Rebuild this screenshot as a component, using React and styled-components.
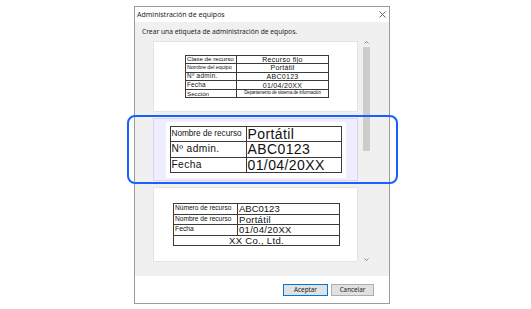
import React from 'react';
import styled, { createGlobalStyle } from 'styled-components';

const GlobalStyle = createGlobalStyle`
  html, body {
    margin: 0;
    padding: 0;
    background: #ffffff;
  }
  body {
    width: 531px;
    height: 309px;
    overflow: hidden;
    font-family: "Noto Sans", "Open Sans", sans-serif;
  }
`;

const Stage = styled.div`
    position: relative;
    width: 531px;
    height: 309px;
    box-sizing: border-box;
    padding: 6px 0 0 134px;
`;

const Dialog = styled.div`
    width: 256px;
    height: 298px;
    box-sizing: border-box;
    border: 1px solid #9c9c9c;
    background: #f0f0f0;
    display: flex;
    flex-direction: column;
`;

const TitleBar = styled.div`
    height: 15px;
    background: #ffffff;
    display: flex;
    align-items: center;
    justify-content: space-between;
    padding: 0 3px 0 2px;
    font-size: 7px;
    color: #1e1e1e;
`;

const Body = styled.div`
    flex: 1;
    display: flex;
    flex-direction: column;
`;

const Subtitle = styled.div`
    padding: 5px 0 0 7px;
    height: 10px;
    line-height: 10px;
    font-size: 6.7px;
    color: #1e1e1e;
`;

const Preview = styled.div`
    margin: 1px 0 0 18px;
    display: flex;
    gap: 4px;
    height: 234px;
`;

const PageList = styled.div`
    width: 205px;
    display: flex;
    flex-direction: column;
    gap: 6px;
    padding-top: 3px;
`;

const Page = styled.div`
    height: ${p => p.$h}px;
    box-sizing: border-box;
    border: 1px solid ${p => p.$selected ? '#d4d4f4' : '#e4e4e4'};
    background: ${p => p.$selected ? '#eeeeff' : '#ffffff'};
    display: flex;
    align-items: center;
    justify-content: center;
`;

const LabelSheet = styled.div`
    width: 180px;
    height: 56px;
    background: #ffffff;
    display: flex;
    align-items: center;
    justify-content: center;
`;

const Table = styled.table`
    width: ${p => p.$w}px;
    table-layout: fixed;
    border-collapse: collapse;
    font-family: "Liberation Sans", Arial, sans-serif;
    color: #111;
    margin-left: ${p => p.$shift || 0}px;
`;

const Row = styled.tr`
    height: ${p => p.$h}px;
`;

const Cell = styled.td`
    border: 1px solid #3a3a3a;
    padding: 0 1px;
    line-height: 1;
    white-space: nowrap;
    overflow: hidden;
    font-size: ${p => p.$size}px;
    text-align: ${p => p.$center ? 'center' : 'left'};
    letter-spacing: ${p => p.$ls || 0}px;
`;

const Scrollbar = styled.div`
    width: 8px;
    height: 226px;
    background: #f0f0f0;
    display: flex;
    flex-direction: column;
    align-items: center;
`;

const ArrowBox = styled.div`
    height: 9px;
    display: flex;
    align-items: center;
    justify-content: center;
`;

const Thumb = styled.div`
    width: 7px;
    height: 104px;
    background: #cdcdcd;
`;

const Track = styled.div`
    flex: 1;
`;

const Footer = styled.div`
    height: 27px;
    background: #ffffff;
    display: flex;
    justify-content: flex-end;
    align-items: flex-start;
    gap: 3px;
    padding: 8px 15px 0 0;
    box-sizing: border-box;
`;

const Button = styled.button`
    width: ${p => p.$w}px;
    height: 12px;
    padding: 0;
    box-sizing: border-box;
    border: 1px solid ${p => p.$primary ? '#0078d7' : '#adadad'};
    background: #e1e1e1;
    font-family: "Noto Sans", "Open Sans", sans-serif;
    font-size: 6.3px;
    color: #1e1e1e;
    line-height: 1;
`;

const Highlight = styled.div`
    position: absolute;
    left: 127px;
    top: 115px;
    width: 271px;
    height: 69px;
    box-sizing: border-box;
    border: 2px solid #1660ff;
    border-radius: 8px;
    pointer-events: none;
`;

const Close = () => (
    <svg width="7" height="7" viewBox="0 0 7 7">
        <path d="M0.5 0.5 L6.5 6.5 M6.5 0.5 L0.5 6.5" stroke="#555" strokeWidth="0.9" />
    </svg>
);

const Chevron = ({ down }) => (
    <svg width="5" height="3" viewBox="0 0 5 3">
        <path d={down ? 'M0.5 0.5 L2.5 2.5 L4.5 0.5' : 'M0.5 2.5 L2.5 0.5 L4.5 2.5'} fill="none" stroke="#7a7a7a" strokeWidth="0.9" />
    </svg>
);

const EquipmentTable = () => (
    <Table $w={144} $shift={3}>
        <colgroup><col style={{ width: 51 }} /><col /></colgroup>
        <tbody>
            <Row $h={8.6}><Cell $size={6.2}>Clase de recurso</Cell><Cell $size={7} $center $ls={0.3}>Recurso fijo</Cell></Row>
            <Row $h={8.6}><Cell $size={5.3}>Nombre del equipo</Cell><Cell $size={7} $center $ls={0.3}>Portátil</Cell></Row>
            <Row $h={8.6}><Cell $size={6.4} $ls={0.3}>Nº admin.</Cell><Cell $size={7} $center $ls={0.3}>ABC0123</Cell></Row>
            <Row $h={8.6}><Cell $size={6.4} $ls={0.2}>Fecha</Cell><Cell $size={7} $center $ls={0.3}>01/04/20XX</Cell></Row>
            <Row $h={8.6}><Cell $size={6.2}>Sección</Cell><Cell $size={4.5} $center $ls={-0.15}>Departamento de sistema de información</Cell></Row>
        </tbody>
    </Table>
);

const AdminTable = () => (
    <Table $w={172}>
        <colgroup><col style={{ width: 76 }} /><col /></colgroup>
        <tbody>
            <Row $h={15.3}><Cell $size={8.2}>Nombre de recurso</Cell><Cell $size={14} $ls={0.4}>Portátil</Cell></Row>
            <Row $h={15.3}><Cell $size={10.2} $ls={0.4}>Nº admin.</Cell><Cell $size={14} $ls={0.4}>ABC0123</Cell></Row>
            <Row $h={15.3}><Cell $size={10.2} $ls={0.4}>Fecha</Cell><Cell $size={14} $ls={0.4}>01/04/20XX</Cell></Row>
        </tbody>
    </Table>
);

const CompanyTable = () => (
    <Table $w={167} $shift={2}>
        <colgroup><col style={{ width: 64 }} /><col /></colgroup>
        <tbody>
            <Row $h={10.5}><Cell $size={6.6}>Número de recurso</Cell><Cell $size={9.5}>ABC0123</Cell></Row>
            <Row $h={10.5}><Cell $size={6.6}>Nombre de recurso</Cell><Cell $size={9.5} $ls={0.3}>Portátil</Cell></Row>
            <Row $h={10.5}><Cell $size={6.8}>Fecha</Cell><Cell $size={9.5} $ls={0.3}>01/04/20XX</Cell></Row>
            <Row $h={10.5}><Cell $size={9.5} $center $ls={0.3} colSpan={2}>XX Co., Ltd.</Cell></Row>
        </tbody>
    </Table>
);

const App = () => {
    return <>
        <GlobalStyle />
        <Stage>
            <Dialog>
                <TitleBar>
                    <span>Administración de equipos</span>
                    <Close />
                </TitleBar>
                <Body>
                    <Subtitle>Crear una etiqueta de administración de equipos.</Subtitle>
                    <Preview>
                        <PageList>
                            <Page $h={71}><EquipmentTable /></Page>
                            <Page $h={63} $selected><LabelSheet><AdminTable /></LabelSheet></Page>
                            <Page $h={75}><CompanyTable /></Page>
                        </PageList>
                        <Scrollbar>
                            <ArrowBox><Chevron /></ArrowBox>
                            <Thumb />
                            <Track />
                            <ArrowBox><Chevron down /></ArrowBox>
                        </Scrollbar>
                    </Preview>
                </Body>
                <Footer>
                    <Button $w={45} $primary>Aceptar</Button>
                    <Button $w={43}>Cancelar</Button>
                </Footer>
            </Dialog>
            <Highlight />
        </Stage>
    </>
}

export default App;
